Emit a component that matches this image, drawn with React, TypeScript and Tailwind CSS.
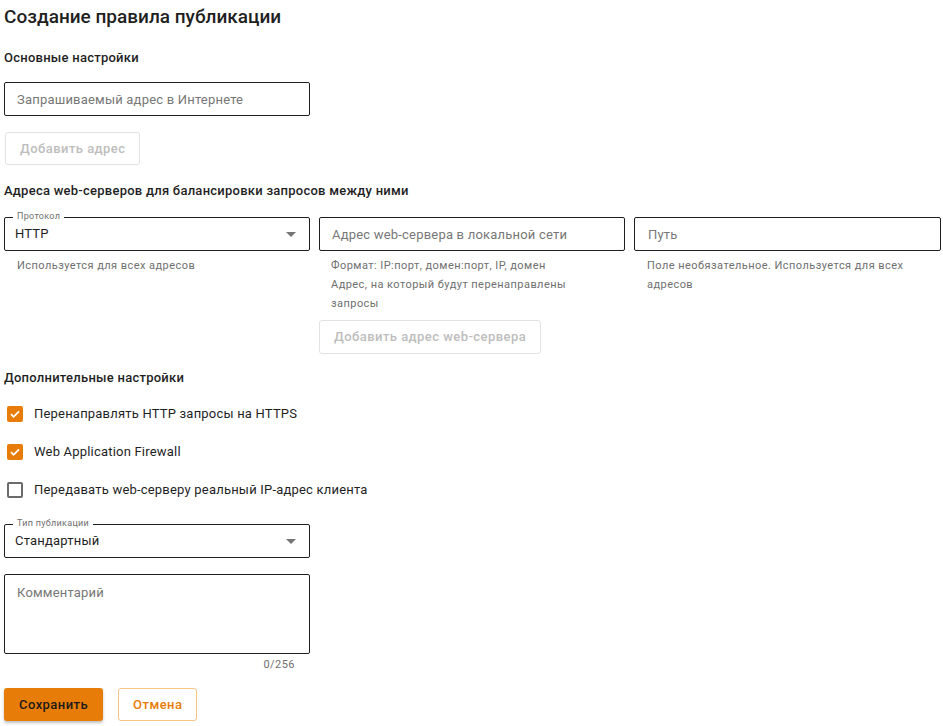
import { useState } from 'react';

function Check({ checked, label }: { checked: boolean; label: string }) {
  return (
    <label className="flex h-[38px] items-center gap-[11px] pl-[3px]">
      {checked ? (
        <span className="flex h-4 w-4 items-center justify-center rounded-[2px] bg-[#e87c08]">
          <svg width="12" height="12" viewBox="0 0 12 12" fill="none">
            <path d="M2 6.2l2.6 2.6L10 3.4" stroke="white" strokeWidth="1.8" />
          </svg>
        </span>
      ) : (
        <span className="h-4 w-4 rounded-[2px] border-2 border-[#6b6b6b]" />
      )}
      <span className="text-[13px] tracking-[0.2px] text-[#1f1f1f]">{label}</span>
    </label>
  );
}

function OutlinedSelect({ label, value }: { label: string; value: string }) {
  return (
    <div className="relative h-[34px] w-[306px] rounded-[2px] border border-[#1f1f1f]">
      <span className="absolute -top-[8px] left-[8px] bg-white px-[4px] text-[9px] leading-[12px] tracking-[0.3px] text-[#6f6f6f]">
        {label}
      </span>
      <div className="flex h-full items-center justify-between pl-[10px] pr-[13px]">
        <span className="text-[13px] tracking-[0.2px] text-[#1f1f1f]">{value}</span>
        <svg width="10" height="5" viewBox="0 0 10 5">
          <path d="M0 0h10L5 5z" fill="#757575" />
        </svg>
      </div>
    </div>
  );
}

export default function App() {
  const [comment, setComment] = useState('');

  return (
    <div className="min-h-screen bg-white px-[4px] font-['Roboto',sans-serif] text-[#1f1f1f]">
      <h1 className="pt-[4px] text-[19px] leading-[26px] font-medium">Создание правила публикации</h1>

      <h2 className="mt-[19px] text-[13px] leading-[18px] font-medium tracking-[0.25px]">Основные настройки</h2>
      <input
        className="mt-[15px] block h-[34px] w-[306px] rounded-[2px] border border-[#1f1f1f] px-[12px] text-[13px] tracking-[0.2px] placeholder:text-[#777]"
        placeholder="Запрашиваемый адрес в Интернете"
      />
      <button className="mt-[16px] ml-px h-[33px] rounded-[3px] border border-[#e2e2e2] px-[14px] text-[13px] font-medium tracking-[0.45px] text-[#bdbdbd]">
        Добавить адрес
      </button>

      <h2 className="mt-[17px] text-[13px] leading-[18px] font-medium tracking-[0.25px]">
        Адреса web-серверов для балансировки запросов между ними
      </h2>
      <div className="mt-[17px] flex gap-[9px]">
        <div className="w-[306px]">
          <OutlinedSelect label="Протокол" value="HTTP" />
          <p className="mt-[5px] pl-[13px] text-[11px] leading-[19px] tracking-[0.45px] text-[#6f6f6f]">Используется для всех адресов</p>
        </div>
        <div className="w-[306px]">
          <input
            className="block h-[34px] w-[306px] rounded-[2px] border border-[#1f1f1f] px-[12px] text-[13px] tracking-[0.2px] placeholder:text-[#777]"
            placeholder="Адрес web-сервера в локальной сети"
          />
          <div className="mt-[5px] pl-[12px] pr-[40px] text-[11px] leading-[19px] tracking-[0.45px] text-[#6f6f6f]">
            <p>Формат: IP:порт, домен:порт, IP, домен</p>
            <p>Адрес, на который будут перенаправлены запросы</p>
          </div>
          <button className="mt-[7px] h-[34px] rounded-[3px] border border-[#e2e2e2] px-[14px] text-[13px] font-medium tracking-[0.45px] text-[#bdbdbd]">
            Добавить адрес web-сервера
          </button>
        </div>
        <div className="w-[307px]">
          <input
            className="block h-[34px] w-[307px] rounded-[2px] border border-[#1f1f1f] px-[13px] text-[13px] tracking-[0.2px] placeholder:text-[#777]"
            placeholder="Путь"
          />
          <p className="mt-[5px] pl-[13px] pr-[30px] text-[11px] leading-[19px] tracking-[0.45px] text-[#6f6f6f]">
            Поле необязательное. Используется для всех адресов
          </p>
        </div>
      </div>

      <h2 className="mt-[15px] text-[13px] leading-[18px] font-medium tracking-[0.25px]">Дополнительные настройки</h2>
      <div className="mt-[8px]">
        <Check checked label="Перенаправлять HTTP запросы на HTTPS" />
        <Check checked label="Web Application Firewall" />
        <Check checked={false} label="Передавать web-серверу реальный IP-адрес клиента" />
      </div>

      <div className="mt-[15px]">
        <OutlinedSelect label="Тип публикации" value="Стандартный" />
      </div>

      <textarea
        className="mt-[16px] block h-[80px] w-[306px] resize-none rounded-[2px] border border-[#1f1f1f] px-[12px] py-[8px] text-[13px] tracking-[0.2px] placeholder:text-[#777]"
        placeholder="Комментарий"
        value={comment}
        onChange={(e) => setComment(e.target.value)}
      />
      <div className="w-[306px] pt-px pr-[15px] text-right text-[11px] leading-[20px] tracking-[0.45px] text-[#6f6f6f]">{comment.length}/256</div>

      <div className="mt-[13px] flex gap-[15px]">
        <button className="h-[33px] rounded-[3px] bg-[#e87c08] px-[15px] text-[13px] font-medium tracking-[0.45px] text-[#1a1a1a] shadow-[0_2px_3px_rgba(0,0,0,0.25)]">
          Сохранить
        </button>
        <button className="h-[33px] rounded-[3px] border border-[#f4c587] px-[14px] text-[13px] font-medium tracking-[0.45px] text-[#e87c08]">
          Отмена
        </button>
      </div>
    </div>
  );
}
